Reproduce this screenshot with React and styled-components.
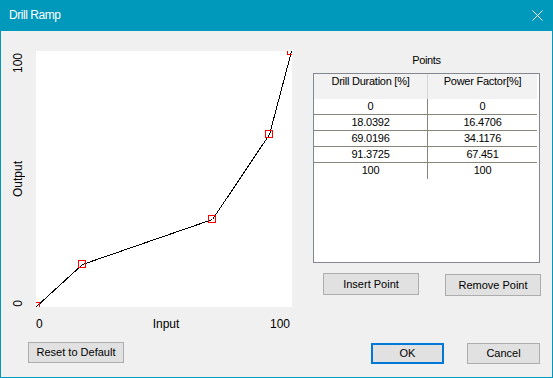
import React from "react";
import styled, { createGlobalStyle } from "styled-components";

const Global = createGlobalStyle`
  html, body { margin: 0; padding: 0; background: #f0f0f0; }
  * { box-sizing: border-box; }
`;

const Window = styled.div`
  width: 553px;
  height: 378px;
  background: #f0f0f0;
  border: 1px solid #0099bc;
  border-top: none;
  display: flex;
  flex-direction: column;
  font-family: "Liberation Sans", Arial, sans-serif;
  font-size: 11px;
  color: #000;
`;

const TitleBar = styled.div`
  height: 31px;
  margin: 0 -1px;
  background: #0099bc;
  color: #fff;
  display: flex;
  align-items: center;
  justify-content: space-between;
  padding: 0 10px 1px 9px;
  font-family: "Liberation Sans", Arial, sans-serif;
  font-size: 12px;
  letter-spacing: -0.45px;
`;

const CloseIcon = styled.svg`
  display: block;
  margin-top: 1px;
`;

const Body = styled.div`
  flex: 1;
  display: grid;
  grid-template-columns: 312px 1fr;
`;

const LeftPane = styled.div`
  padding-top: 20px;
  display: flex;
  flex-direction: column;
  align-items: flex-start;
`;

const PlotRow = styled.div`
  display: flex;
`;

const YAxis = styled.div`
  width: 35px;
  height: 256px;
  display: grid;
  grid-template-rows: 1fr auto 1fr;
  justify-items: center;
  font-size: 12px;
`;

const VLabel = styled.span`
  writing-mode: vertical-rl;
  transform: rotate(180deg);
  line-height: 13px;
  align-self: ${(p) => p.$align || "center"};
  padding-bottom: ${(p) => p.$pad || 0}px;
`;

const PlotArea = styled.svg`
  display: block;
  background: #fff;
`;

const XAxis = styled.div`
  margin-left: 35px;
  margin-top: 10px;
  width: 256px;
  display: grid;
  grid-template-columns: 1fr auto 1fr;
  font-size: 12px;
  line-height: 14px;
  padding-right: 2px;
`;

const XLabel = styled.span`
  justify-self: ${(p) => p.$justify};
  margin-left: ${(p) => p.$shift || 0}px;
`;

const Button = styled.button`
  font-family: "Liberation Sans", Arial, sans-serif;
  font-size: 11px;
  color: #000;
  background: #e1e1e1;
  border: ${(p) => (p.$default ? "2px solid #0078d7" : "1px solid #adadad")};
  width: ${(p) => p.$w}px;
  height: ${(p) => p.$h}px;
  padding: 0;
  margin: 0;
  line-height: 1;
  margin-left: ${(p) => p.$ml || 0}px;
  margin-top: ${(p) => p.$mt || 0}px;
`;

const RightPane = styled.div`
  display: flex;
  flex-direction: column;
  align-items: flex-start;
`;

const GroupLabel = styled.div`
  width: 227px;
  text-align: center;
  padding-top: 23px;
  line-height: 13px;
  letter-spacing: -0.35px;
`;

const ListBox = styled.div`
  margin-top: 6px;
  width: 227px;
  height: 190px;
  border: 1px solid #828790;
  background: #fff;
  letter-spacing: -0.25px;
`;

const Grid = styled.div`
  display: grid;
  grid-template-columns: 114px 109px;
`;

const HeadCell = styled.div`
  height: 25px;
  background: #f2f2f2;
  text-align: center;
  padding-top: 1px;
  line-height: 13px;
  border-right: ${(p) => (p.$first ? "1px solid #d5d5d5" : "none")};
`;

const Cell = styled.div`
  height: 16px;
  line-height: 15px;
  text-align: center;
  border-bottom: ${(p) => (p.$last ? "none" : "1px solid #85857a")};
  border-right: ${(p) => (p.$first ? "1px solid #85857a" : "none")};
  padding-bottom: ${(p) => (p.$last ? 1 : 0)}px;
`;

const ButtonRow = styled.div`
  display: flex;
  align-items: flex-start;
  margin-top: ${(p) => p.$mt}px;
`;

const points = [
  [0, 0],
  [18.0392, 16.4706],
  [69.0196, 34.1176],
  [91.3725, 67.451],
  [100, 100],
];

const toPx = ([x, y]) => [Math.round(x * 2.55), 255 - Math.round(y * 2.55)];

function Chart() {
  const px = points.map(toPx);
  return (
    <PlotArea width="256" height="256" viewBox="0 0 256 256">
      <polyline
        points={px.map(([x, y]) => `${x + 0.5},${y + 0.5}`).join(" ")}
        fill="none"
        stroke="#000"
        strokeWidth="1"
        shapeRendering="crispEdges"
      />
      {px.map(([x, y], i) => (
        <rect
          key={i}
          x={x - 3.5}
          y={y - 3.5}
          width="7"
          height="7"
          fill="none"
          stroke="#ff0000"
          strokeWidth="1"
          shapeRendering="crispEdges"
        />
      ))}
    </PlotArea>
  );
}

export default function App() {
  const fmt = (v) => String(v);
  return (
    <>
      <Global />
      <Window>
        <TitleBar>
          <span>Drill Ramp</span>
          <CloseIcon width="11" height="11" viewBox="0 0 11 11">
            <path d="M0.5 0.5 L10.5 10.5 M10.5 0.5 L0.5 10.5" stroke="#fff" strokeWidth="1" />
          </CloseIcon>
        </TitleBar>
        <Body>
          <LeftPane>
            <PlotRow>
              <YAxis>
                <VLabel $align="start" $pad={2}>100</VLabel>
                <VLabel>Output</VLabel>
                <VLabel $align="end">0</VLabel>
              </YAxis>
              <Chart />
            </PlotRow>
            <XAxis>
              <XLabel $justify="start">0</XLabel>
              <XLabel $justify="center" $shift={6}>Input</XLabel>
              <XLabel $justify="end">100</XLabel>
            </XAxis>
            <Button $w={96} $h={21} $ml={27} $mt={11}>Reset to Default</Button>
          </LeftPane>
          <RightPane>
            <GroupLabel>Points</GroupLabel>
            <ListBox>
              <Grid>
                <HeadCell $first>Drill Duration [%]</HeadCell>
                <HeadCell>Power Factor[%]</HeadCell>
                {points.map(([a, b], i) => (
                  <React.Fragment key={i}>
                    <Cell $first $last={i === points.length - 1}>{fmt(a)}</Cell>
                    <Cell $last={i === points.length - 1}>{fmt(b)}</Cell>
                  </React.Fragment>
                ))}
              </Grid>
            </ListBox>
            <ButtonRow $mt={10}>
              <Button $w={96} $h={22} $ml={10}>Insert Point</Button>
              <Button $w={96} $h={22} $ml={26} $mt={1}>Remove Point</Button>
            </ButtonRow>
            <ButtonRow $mt={47}>
              <Button $w={73} $h={21} $ml={58} $default>OK</Button>
              <Button $w={73} $h={21} $ml={23}>Cancel</Button>
            </ButtonRow>
          </RightPane>
        </Body>
      </Window>
    </>
  );
}
